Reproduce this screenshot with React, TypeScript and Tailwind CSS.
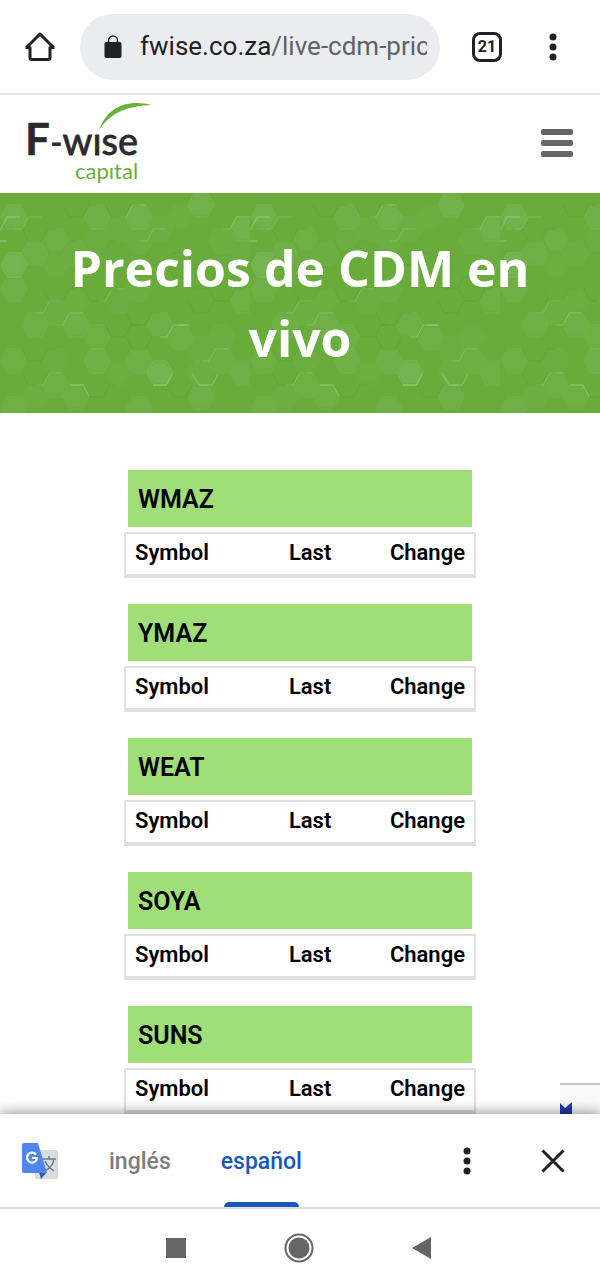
import { useState } from 'react';

const instruments = ['WMAZ', 'YMAZ', 'WEAT', 'SOYA', 'SUNS'];

// Flat-topped cells of the hero texture: [column, y, opacity]
const cells: [number, number, number][] = [
  [0, 24, 0.14], [4, 24, 0.1], [6, 24, 0.14], [9, 12, 0.16], [11, 36, 0.14], [12, 24, 0.14],
  [2, 48, 0.08], [3, 60, 0.06], [1, 60, 0.1], [0, 72, 0.2], [5, 36, 0.05], [8, 24, 0.03],
  [6, 48, 0.05], [7, 36, 0.05], [10, 48, 0.06], [12, 72, 0.1], [11, 60, 0.04], [4, 48, 0.04],
  [0, 96, 0.1], [2, 72, 0.03], [5, 108, 0.04], [6, 96, 0.06], [3, 108, 0.03], [11, 108, 0.08],
  [2, 120, 0.05], [1, 132, 0.1], [3, 132, 0.12], [4, 144, 0.08], [7, 132, 0.1], [8, 144, 0.1],
  [0, 168, 0.08], [2, 168, 0.04], [4, 168, 0.12], [6, 168, 0.1], [9, 156, 0.04], [10, 144, 0.05],
  [7, 180, 0.2], [9, 180, 0.06], [10, 168, 0.07], [11, 180, 0.09], [2, 192, 0.08], [5, 180, 0.03],
  [3, 204, 0.08], [1, 204, 0.05], [6, 216, 0.08], [9, 204, 0.1], [0, 216, 0.08], [12, 216, 0.08],
];

const litEdges: [number, number][] = [
  [6, 24], [11, 36], [2, 120], [3, 132], [8, 144], [2, 192], [10, 168], [1, 36], [7, 48], [5, 108],
];

const darkEdges: [number, number][] = [
  [1, 36], [3, 12], [5, 12], [7, 60], [8, 72], [9, 84], [10, 96], [2, 96], [4, 96], [5, 132],
  [6, 120], [9, 108], [1, 180], [4, 192], [8, 192], [2, 48], [4, 48], [6, 72], [1, 156], [6, 144],
];

function HexTexture() {
  const x = (col: number) => 14 + Math.round(col * 20.8);
  return (
    <svg className="absolute inset-0 size-full" aria-hidden="true">
      <defs>
        <pattern id="hexes" width="250" height="220" patternUnits="userSpaceOnUse">
          {cells.map(([col, y, o]) => (
            <g key={`${col}-${y}`} transform={`translate(${x(col)} ${y})`} opacity={o}>
              <path d="M-12 0l6-10.5h12l6 10.5-6 10.5H-6z" fill="#a9c9a4" />
              <path d="M-13 0l6.500-12h13L13 0 6.500 12h-13z" fill="none" stroke="#d7efcf" strokeWidth="1" />
            </g>
          ))}
          {litEdges.map(([col, y]) => (
            <path key={`${col}-${y}`} transform={`translate(${x(col)} ${y})`} d="M-20 0h7l6.500-12h13" fill="none" stroke="#b4d99c" strokeOpacity=".28" />
          ))}
          {darkEdges.map(([col, y]) => (
            <path key={`${col}-${y}`} transform={`translate(${x(col)} ${y})`} d="M-13 0l6.500 12h13L13 0h8" fill="none" stroke="#4f9134" strokeOpacity=".35" />
          ))}
          <path d="M0 36h1l6-12h13M0 48h7M153 192h13l6-11M192 180l7 12h13l6-11M70 192h13l6 11M177 132h12" fill="none" stroke="#bfe0b0" strokeOpacity=".3" strokeWidth="1.500" />
        </pattern>
      </defs>
      <rect width="100%" height="100%" fill="url(#hexes)" />
    </svg>
  );
}

function Logo() {
  return (
    <svg width="130" height="84" viewBox="0 0 130 84" role="img" aria-label="F-wise capital" fontFamily="Lato, sans-serif">
      <path d="M75 28C84 4 104-3 128 3 105 4 88 9 75 28z" fill="#6aae3c" />
      <text x="1" y="53" fontSize="38" fill="#2b2b2d" stroke="#2b2b2d">
        <tspan fontSize="44" fontWeight="700" strokeWidth="0.500">F</tspan>
        <tspan fontSize="34" fontWeight="700" strokeWidth="0">-</tspan>
        <tspan strokeWidth="0.800">wıse</tspan>
      </text>
      <text x="51" y="77" fontSize="22" fill="#6aae3c">capıtal</text>
    </svg>
  );
}

function MoreDots() {
  return (
    <svg width="8" height="28" viewBox="0 0 8 28" fill="#202124" aria-hidden="true">
      <circle cx="4" cy="4" r="3.500" />
      <circle cx="4" cy="14" r="3.500" />
      <circle cx="4" cy="24" r="3.500" />
    </svg>
  );
}

function BrowserBar() {
  return (
    <div className="flex h-[95px] shrink-0 items-center border-b-2 border-[#e6e6e6] pr-[43px] pl-6">
      <button aria-label="Home" className="mr-6">
        <svg width="32" height="32" viewBox="0 0 32 32" fill="none" stroke="#202124" strokeWidth="3" strokeLinejoin="round" aria-hidden="true">
          <path d="M2.500 16.500L16 3l13.500 13.500M1.500 16.500h4.500v10.500a1.500 1.500 0 0 0 1.500 1.500h17a1.500 1.500 0 0 0 1.500-1.500V16.500h4.500" />
        </svg>
      </button>
      <button aria-label="Address" className="flex h-[66px] min-w-0 flex-1 items-center rounded-full bg-[#ebecf0] pr-[13px] pl-6">
        <svg width="18" height="24" viewBox="0 0 18 24" className="mr-[18px] shrink-0" aria-hidden="true">
          <rect x="0.500" y="7" width="17" height="16" rx="2" fill="#202124" />
          <path d="M4.500 8V5.500a4.500 4.500 0 0 1 9 0V8" fill="none" stroke="#202124" strokeWidth="1.500" />
        </svg>
        <span className="flex-1 overflow-hidden text-left text-[26px] whitespace-nowrap text-[#5f6368]">
          <span className="text-[#202124]">fwise.co.za</span>/live-cdm-pric
        </span>
      </button>
      <button aria-label="Tabs" className="ml-8 flex size-[30px] items-center justify-center rounded-lg border-3 border-[#202124] text-base font-bold text-[#202124]">
        21
      </button>
      <button aria-label="Menu" className="ml-[47px]">
        <MoreDots />
      </button>
    </div>
  );
}

function PriceTable({ name }: { name: string }) {
  return (
    <section>
      <h2 className="mx-1 flex h-[57px] items-center bg-[#a0de78] px-[10px] pt-[3px] text-[25px] font-semibold">{name}</h2>
      <table aria-label={name} className="mt-[5px] h-[46px] w-full table-fixed border-separate border-spacing-0 border-2 border-b-4 border-[#e0e0e0] text-[22px] leading-[34px]">
        <thead>
          <tr>
            <th className="w-[35%] pb-[2px] pl-[9px] text-left font-semibold">Symbol</th>
            <th className="w-[24%] pb-[2px] text-right font-semibold">Last</th>
            <th className="pr-[9px] pb-[2px] text-right font-semibold">Change</th>
          </tr>
        </thead>
      </table>
    </section>
  );
}

function TranslateBar() {
  const [lang, setLang] = useState('español');

  return (
    <div className="relative flex h-[95px] shrink-0 items-center border-b-2 border-[#dedede] bg-white pr-[35px] pl-[21px] shadow-[0_-2px_12px_rgba(0,0,0,0.4)]">
      <svg width="38" height="38" viewBox="0 0 38 38" className="mr-[42px]" aria-hidden="true">
        <rect x="14" y="8" width="23" height="29" rx="2" fill="#dcdcdc" />
        <path d="M22 17h13M28 14v3M33 17c-1 6-5 10-9 12M24 19c2 5 6 8 9 10" fill="none" stroke="#607d8b" strokeWidth="1.500" />
        <path d="M18 30h8l-6 7z" fill="#3652b5" />
        <path d="M3 1h14l9 30H3a2 2 0 0 1-2-2V3a2 2 0 0 1 2-2z" fill="#4c86ee" />
        <path d="M15 12.500a5 5 0 1 0 1 3.500h-5" fill="none" stroke="#fff" strokeWidth="2.200" />
      </svg>
      {['inglés', 'español'].map((l) => (
        <button
          key={l}
          onClick={() => setLang(l)}
          className={`relative mr-[34px] h-full px-2 pt-1 text-[23px] font-medium ${lang === l ? 'text-[#1a57bd]' : 'text-[#7d7d7d]'}`}
        >
          {l}
          {lang === l && <span className="absolute inset-x-[11px] bottom-0 h-[5px] rounded-t-md bg-[#1a57bd]" />}
        </button>
      ))}
      <button aria-label="Translate options" className="mr-[70px] ml-auto">
        <MoreDots />
      </button>
      <button aria-label="Close">
        <svg width="24" height="24" viewBox="0 0 24 24" stroke="#202124" strokeWidth="3" aria-hidden="true">
          <path d="M1.500 1.500l21 21M22.500 1.500l-21 21" />
        </svg>
      </button>
    </div>
  );
}

function SystemNav() {
  return (
    <nav className="relative flex h-[78px] shrink-0 items-center justify-center gap-[98px] bg-white pr-[2px]">
      <button aria-label="Recent apps" className="size-[20px] bg-[#666]" />
      <button aria-label="Home screen">
        <svg width="30" height="30" viewBox="0 0 30 30" aria-hidden="true">
          <circle cx="15" cy="15" r="13.500" fill="none" stroke="#666" strokeWidth="2" />
          <circle cx="15" cy="15" r="10.500" fill="#666" />
        </svg>
      </button>
      <button aria-label="Back">
        <svg width="20" height="22" viewBox="0 0 20 22" fill="#666" aria-hidden="true">
          <path d="M0 11L19 0v22z" />
        </svg>
      </button>
    </nav>
  );
}

export default function App() {
  return (
    <div className="flex h-screen flex-col bg-white font-[Roboto,sans-serif] text-black">
      <BrowserBar />

      <div className="relative min-h-0 flex-1 overflow-hidden">
        <header className="flex h-[98px] items-center justify-between pr-[27px] pl-6">
          <Logo />
          <button aria-label="Open menu" className="flex w-8 flex-col gap-[5px] pb-[2px]">
            <span className="h-[6px] rounded-xs bg-[#666]" />
            <span className="h-[6px] rounded-xs bg-[#666]" />
            <span className="h-[6px] rounded-xs bg-[#666]" />
          </button>
        </header>

        <div className="relative bg-[#69ac3c] px-10 py-10">
          <HexTexture />
          <h1 className="relative text-center font-['Open_Sans',sans-serif] text-[50px] leading-[70px] font-bold text-white">
            Precios de CDM en vivo
          </h1>
        </div>

        <main className="mx-auto flex w-[352px] flex-col gap-[26px] pt-[57px]">
          {instruments.map((name) => (
            <PriceTable key={name} name={name} />
          ))}
        </main>

        <div className="absolute right-0 bottom-0 h-8 w-10 overflow-hidden">
          <div className="mt-[1px] h-full border-t-2 border-[#c4c4c4] bg-[#f9f9f9]" />
          <svg width="12" height="12" viewBox="0 0 12 12" className="absolute bottom-0 left-0" aria-hidden="true">
            <path d="M0 1l5 5 7-6v12H0z" fill="#1c3aa9" />
          </svg>
        </div>
      </div>

      <TranslateBar />
      <SystemNav />
    </div>
  );
}
